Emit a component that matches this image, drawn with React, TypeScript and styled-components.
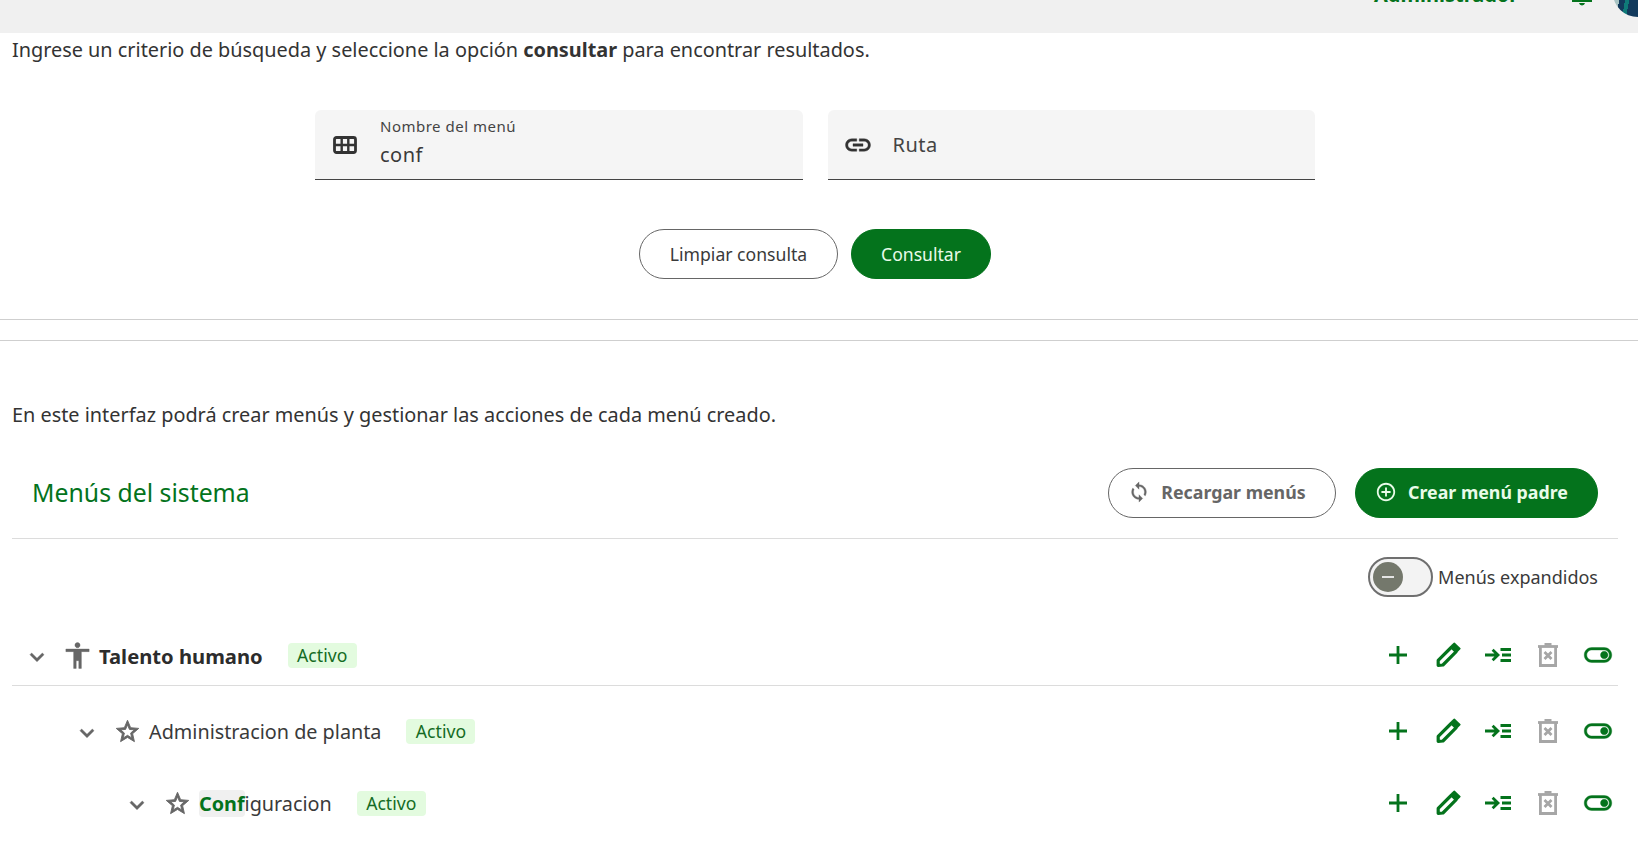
import React, { FC, ReactNode } from "react";
import styled, { createGlobalStyle } from "styled-components";

const GREEN = "#04731c";
const TEXT = "#333333";

const GlobalStyle = createGlobalStyle`
	html, body {
		margin: 0;
		padding: 0;
		background: #fff;
		overflow: hidden;
	}
	body {
		font-family: "Noto Sans", "Open Sans", sans-serif;
		color: ${TEXT};
	}
	b { font-weight: 700; }
`;

const Page = styled.div`
	width: 1638px;
	height: 842px;
	overflow: hidden;
`;

const TopBar = styled.header`
	height: 33px;
	background: #f0f0f0;
	position: relative;
	overflow: hidden;
`;

const UserName = styled.span`
	position: absolute;
	left: 1374px;
	top: -19px;
	font-size: 20px;
	line-height: 28px;
	font-weight: 700;
	color: ${GREEN};
`;

const Bell = styled.svg`
	position: absolute;
	left: 1570px;
	top: -12px;
	width: 24px;
	height: 18px;
`;

const Avatar = styled.div`
	position: absolute;
	left: 1613px;
	top: -31px;
	width: 50px;
	height: 48px;
	border-radius: 50%;
	background: linear-gradient(100deg, #a9c4c4 0 20%, #123a5c 20% 30%, #0f7a78 30% 37%, #123a5c 37%);
`;

const Intro = styled.p`
	margin: 0;
	padding: 3px 12px 0;
	font-size: 19.86px;
	line-height: 28px;
	color: ${TEXT};
`;

const SearchRow = styled.div`
	display: flex;
	justify-content: center;
	gap: 25px;
	width: 1630px;
	margin-top: 46px;
`;

const Field = styled.div`
	width: 487.5px;
	height: 70px;
	box-sizing: border-box;
	background: #f5f5f5;
	border-bottom: 1px solid #444;
	border-radius: 6px 6px 0 0;
	display: flex;
	align-items: center;
	padding-left: 16px;
`;

const FieldIcon = styled.span`
	width: 28px;
	height: 24px;
	display: flex;
	align-items: center;
	justify-content: center;
	color: #333;
	margin-right: 21px;
`;

const FieldStack = styled.div`
	display: flex;
	flex-direction: column;
	margin-top: -3px;
`;

const FieldLabel = styled.label`
	font-size: 15px;
	line-height: 18px;
	letter-spacing: 0.5px;
	color: #444;
`;

const FieldValue = styled.span`
	font-size: 20px;
	line-height: 28px;
	letter-spacing: 0.5px;
	margin-top: 6px;
	color: #3a3a3a;
`;

const FieldPlaceholder = styled.span`
	font-size: 20px;
	line-height: 28px;
	letter-spacing: 0.5px;
	color: #444;
`;

const Actions = styled.div`
	display: flex;
	justify-content: center;
	gap: 13px;
	width: 1630px;
	margin-top: 49px;
`;

const Pill = styled.button<{ $primary?: boolean; $bold?: boolean; $w: number }>`
	width: ${(p) => p.$w}px;
	height: 50px;
	box-sizing: border-box;
	border-radius: 25px;
	border: 1px solid ${(p) => (p.$primary ? GREEN : "#666")};
	background: ${(p) => (p.$primary ? GREEN : "#fff")};
	color: ${(p) => (p.$primary ? "#e9fbe9" : p.$bold ? "#666" : "#3a3a3a")};
	font-family: inherit;
	font-size: ${(p) => (p.$bold ? 17.8 : 17.6)}px;
	font-weight: ${(p) => (p.$bold ? 700 : 400)};
	display: inline-flex;
	align-items: center;
	justify-content: center;
	gap: 11px;
	padding: 0 ${(p) => (p.$bold ? 10 : 0)}px ${(p) => (p.$bold ? 2 : 0)}px 0;
`;

const Rule = styled.hr<{ $top: number }>`
	border: 0;
	border-top: 1px solid #cfcfcf;
	margin: ${(p) => p.$top}px 0 0;
`;

const Description = styled.p`
	margin: 60px 0 0;
	padding: 0 12px;
	font-size: 19.86px;
	line-height: 28px;
	color: ${TEXT};
`;

const Panel = styled.section`
	margin: 0 20px 0 12px;
`;

const PanelHead = styled.div`
	display: flex;
	align-items: center;
	margin-top: 29px;
	padding: 10px 20px 20px;
	border-bottom: 1px solid #dcdcdc;
	gap: 19px;
`;

const PanelTitle = styled.h2`
	margin: -2px auto 0 0;
	font-size: 24.8px;
	line-height: 32px;
	font-weight: 400;
	color: ${GREEN};
`;

const ToggleRow = styled.div`
	display: flex;
	justify-content: flex-end;
	align-items: center;
	gap: 5px;
	height: 40px;
	margin-top: 18px;
	margin-bottom: 28px;
	padding-right: 20px;
	font-size: 18px;
	color: #3a3a3a;
`;

const SwitchTrack = styled.div`
	width: 65px;
	height: 40px;
	box-sizing: border-box;
	border: 2px solid #6f6f6f;
	border-radius: 20px;
	background: #f3f3f3;
	display: flex;
	align-items: center;
	padding-left: 3px;
`;

const SwitchKnob = styled.div`
	width: 30px;
	height: 30px;
	border-radius: 50%;
	background: #74786c;
	display: flex;
	align-items: center;
	justify-content: center;

	&:before {
		content: "";
		width: 12px;
		height: 2px;
		background: #e4e4e4;
	}
`;

const Row = styled.div<{ $depth: number; $top?: boolean }>`
	display: flex;
	align-items: center;
	height: ${(p) => (p.$top ? 60 : 72)}px;
	padding-left: ${(p) => 11 + p.$depth * 50}px;
	padding-right: 6px;
	border-bottom: ${(p) => (p.$top ? "1px solid #dcdcdc" : "0")};
	margin-bottom: ${(p) => (p.$top ? 9 : 0)}px;
`;

const Chevron = styled.svg`
	width: 28px;
	height: 28px;
	fill: #666;
	stroke: #666;
	stroke-width: 0.4;
	flex: none;
	margin: 3px 12px 0 0;
`;

const RowIcon = styled.span`
	width: 28px;
	height: 28px;
	display: flex;
	align-items: center;
	justify-content: center;
	color: #666;
	margin-right: 8px;
`;

const RowName = styled.span<{ $bold?: boolean }>`
	font-size: ${(p) => (p.$bold ? 20.2 : 19.8)}px;
	line-height: 26px;
	margin-top: 1px;
	font-weight: ${(p) => (p.$bold ? 700 : 400)};
	color: ${(p) => (p.$bold ? "#2c2c2c" : "#3a3a3a")};
`;

const Match = styled.mark`
	background: #f0f0f0;
	color: ${GREEN};
	font-weight: 700;
	border-radius: 4px;
	padding: 0;
`;

const Badge = styled.span`
	margin-left: 25px;
	height: 25px;
	width: 69px;
	text-align: center;
	background: #e3fbdf;
	border-radius: 4px;
	color: #146b24;
	font-size: 17.6px;
	line-height: 25px;
`;

const RowActions = styled.div`
	margin-left: auto;
	display: flex;
	gap: 22px;
	align-items: center;
`;

const ActionIcon = styled.span<{ $muted?: boolean }>`
	width: 28px;
	height: 28px;
	display: flex;
	align-items: center;
	justify-content: center;
	color: ${(p) => (p.$muted ? "#a6a6a6" : GREEN)};
`;

const Material: FC<{ d: string; size: number; weight?: number }> = ({ d, size, weight = 0 }) => (
	<svg
		width={size}
		height={size}
		viewBox="0 0 24 24"
		fill="currentColor"
		stroke="currentColor"
		strokeWidth={weight}
		style={{ flex: "none" }}
	>
		<path d={d} />
	</svg>
);

const PlusIcon = () => (
	<svg width="20" height="20" viewBox="0 0 20 20" fill="none" stroke="currentColor" strokeWidth="2.8">
		<path d="M10 1v18M1 10h18" />
	</svg>
);

const Pencil = () => (
	<svg width="26" height="26" viewBox="0 0 26 26" fill="none" stroke="currentColor" strokeWidth="3.2" strokeLinejoin="round">
		<path d="M3.2 23.400v-5L16.600 5l4.600 4.600L7.900 23z" />
		<path d="M17.200 3.400l2.200-1.800 5.200 5-2.200 2.200z" fill="currentColor" strokeWidth="2" />
	</svg>
);

const Indent = () => (
	<svg width="26" height="14" viewBox="0 0 26 14" fill="none" stroke="currentColor" strokeWidth="2.8">
		<path d="M0 7h12M7.600 1.800L13 7l-5.400 5.200" />
		<path d="M15.500 1.500H26M17 7h9M15.500 12.500H26" />
	</svg>
);

const TrashX = () => (
	<svg width="20" height="24" viewBox="0 0 20 24" fill="none" stroke="currentColor" strokeWidth="2.8">
		<path d="M2.400 3.500v19h15.200v-19" />
		<path d="M0 3.500h20" />
		<path d="M6.500 1.200h7" />
		<path d="M6.500 9l7 7M13.500 9l-7 7" />
	</svg>
);

const Grid = () => (
	<svg width="24" height="18" viewBox="0 0 24 18" fill="none" stroke="currentColor">
		<rect x="1.500" y="1.500" width="21" height="15" rx="2" strokeWidth="2.800" />
		<path d="M1.500 9h21M8.700 1.500v15M15.300 1.500v15" strokeWidth="2.400" />
	</svg>
);

const STAR =
	"M22 9.24l-7.19-.62L12 2 9.19 8.63 2 9.24l5.46 4.73L5.82 21 12 17.27 18.18 21l-1.63-7.03L22 9.24zM12 15.4l-3.76 2.27 1-4.28-3.32-2.88 4.38-.38L12 6.1l1.71 4.04 4.38.38-3.32 2.88 1 4.28L12 15.4z";
const LINK =
	"M3.9 12c0-1.71 1.39-3.1 3.1-3.1h4V7H7c-2.76 0-5 2.24-5 5s2.24 5 5 5h4v-1.9H7c-1.71 0-3.1-1.39-3.1-3.1zM8 13h8v-2H8v2zm9-6h-4v1.9h4c1.71 0 3.1 1.39 3.1 3.1s-1.39 3.1-3.1 3.1h-4V17h4c2.76 0 5-2.24 5-5s-2.24-5-5-5z";
const PERSON =
	"M12 2c1.1 0 2 .9 2 2s-.9 2-2 2-2-.9-2-2 .9-2 2-2zm9 7h-6v13h-2v-6h-2v6H9V9H3V7h18v2z";
const SYNC =
	"M12 4V1L8 5l4 4V6c3.31 0 6 2.69 6 6 0 1.01-.25 1.97-.7 2.8l1.46 1.46C19.54 15.03 20 13.57 20 12c0-4.42-3.58-8-8-8zm0 14c-3.31 0-6-2.69-6-6 0-1.01.25-1.97.7-2.8L5.24 7.74C4.46 8.97 4 10.43 4 12c0 4.42 3.58 8 8 8v3l4-4-4-4v3z";
const ADD_CIRCLE =
	"M13 7h-2v4H7v2h4v4h2v-4h4v-2h-4V7zm-1-5C6.48 2 2 6.48 2 12s4.48 10 10 10 10-4.48 10-10S17.52 2 12 2zm0 18c-4.41 0-8-3.59-8-8s3.59-8 8-8 8 3.59 8 8-3.59 8-8 8z";
const TOGGLE_ON =
	"M17 6H7c-3.31 0-6 2.69-6 6s2.69 6 6 6h10c3.31 0 6-2.69 6-6s-2.69-6-6-6zm0 10H7c-2.21 0-4-1.79-4-4s1.79-4 4-4h10c2.21 0 4 1.79 4 4s-1.79 4-4 4zm0-7c-1.66 0-3 1.34-3 3s1.34 3 3 3 3-1.34 3-3-1.34-3-3-3z";

const RowTools: FC = () => (
	<RowActions>
		<ActionIcon><PlusIcon /></ActionIcon>
		<ActionIcon><Pencil /></ActionIcon>
		<ActionIcon><Indent /></ActionIcon>
		<ActionIcon $muted><TrashX /></ActionIcon>
		<ActionIcon><Material d={TOGGLE_ON} size={30} weight={0.3} /></ActionIcon>
	</RowActions>
);

const MenuRow: FC<{ depth: number; top?: boolean; icon: ReactNode; children: ReactNode }> = ({
	depth,
	top,
	icon,
	children,
}) => (
	<Row $depth={depth} $top={top}>
		<Chevron viewBox="0 0 24 24"><path d="M16.59 8.59L12 13.17 7.41 8.59 6 10l6 6 6-6z" /></Chevron>
		<RowIcon>{icon}</RowIcon>
		{children}
		<Badge>Activo</Badge>
		<RowTools />
	</Row>
);

export default function App() {
	return (
		<Page>
			<GlobalStyle />
			<TopBar>
				<UserName>Administrador</UserName>
				<Bell viewBox="0 0 24 18" fill={GREEN}>
					<path d="M2 12h20v2H2zM9 15h6a3 3 0 0 1-3 2.400 3 3 0 0 1-3-2.400z" />
				</Bell>
				<Avatar />
			</TopBar>
			<Intro>
				Ingrese un criterio de búsqueda y seleccione la opción <b>consultar</b> para encontrar resultados.
			</Intro>
			<SearchRow>
				<Field>
					<FieldIcon><Grid /></FieldIcon>
					<FieldStack>
						<FieldLabel>Nombre del menú</FieldLabel>
						<FieldValue>conf</FieldValue>
					</FieldStack>
				</Field>
				<Field>
					<FieldIcon><Material d={LINK} size={30} weight={0.3} /></FieldIcon>
					<FieldPlaceholder>Ruta</FieldPlaceholder>
				</Field>
			</SearchRow>
			<Actions>
				<Pill $w={199}>Limpiar consulta</Pill>
				<Pill $w={140} $primary>Consultar</Pill>
			</Actions>
			<Rule $top={40} />
			<Rule $top={20} />
			<Description>En este interfaz podrá crear menús y gestionar las acciones de cada menú creado.</Description>
			<Panel>
				<PanelHead>
					<PanelTitle>Menús del sistema</PanelTitle>
					<Pill $w={228} $bold><Material d={SYNC} size={22} weight={0.4} />Recargar menús</Pill>
					<Pill $w={243} $primary $bold><Material d={ADD_CIRCLE} size={22} />Crear menú padre</Pill>
				</PanelHead>
				<ToggleRow>
					<SwitchTrack><SwitchKnob /></SwitchTrack>
					Menús expandidos
				</ToggleRow>
				<MenuRow depth={0} top icon={<Material d={PERSON} size={31} weight={0.3} />}>
					<RowName $bold>Talento humano</RowName>
				</MenuRow>
				<MenuRow depth={1} icon={<Material d={STAR} size={27} weight={0.8} />}>
					<RowName>Administracion de planta</RowName>
				</MenuRow>
				<MenuRow depth={2} icon={<Material d={STAR} size={27} weight={0.8} />}>
					<RowName><Match>Conf</Match>iguracion</RowName>
				</MenuRow>
			</Panel>
		</Page>
	);
}
